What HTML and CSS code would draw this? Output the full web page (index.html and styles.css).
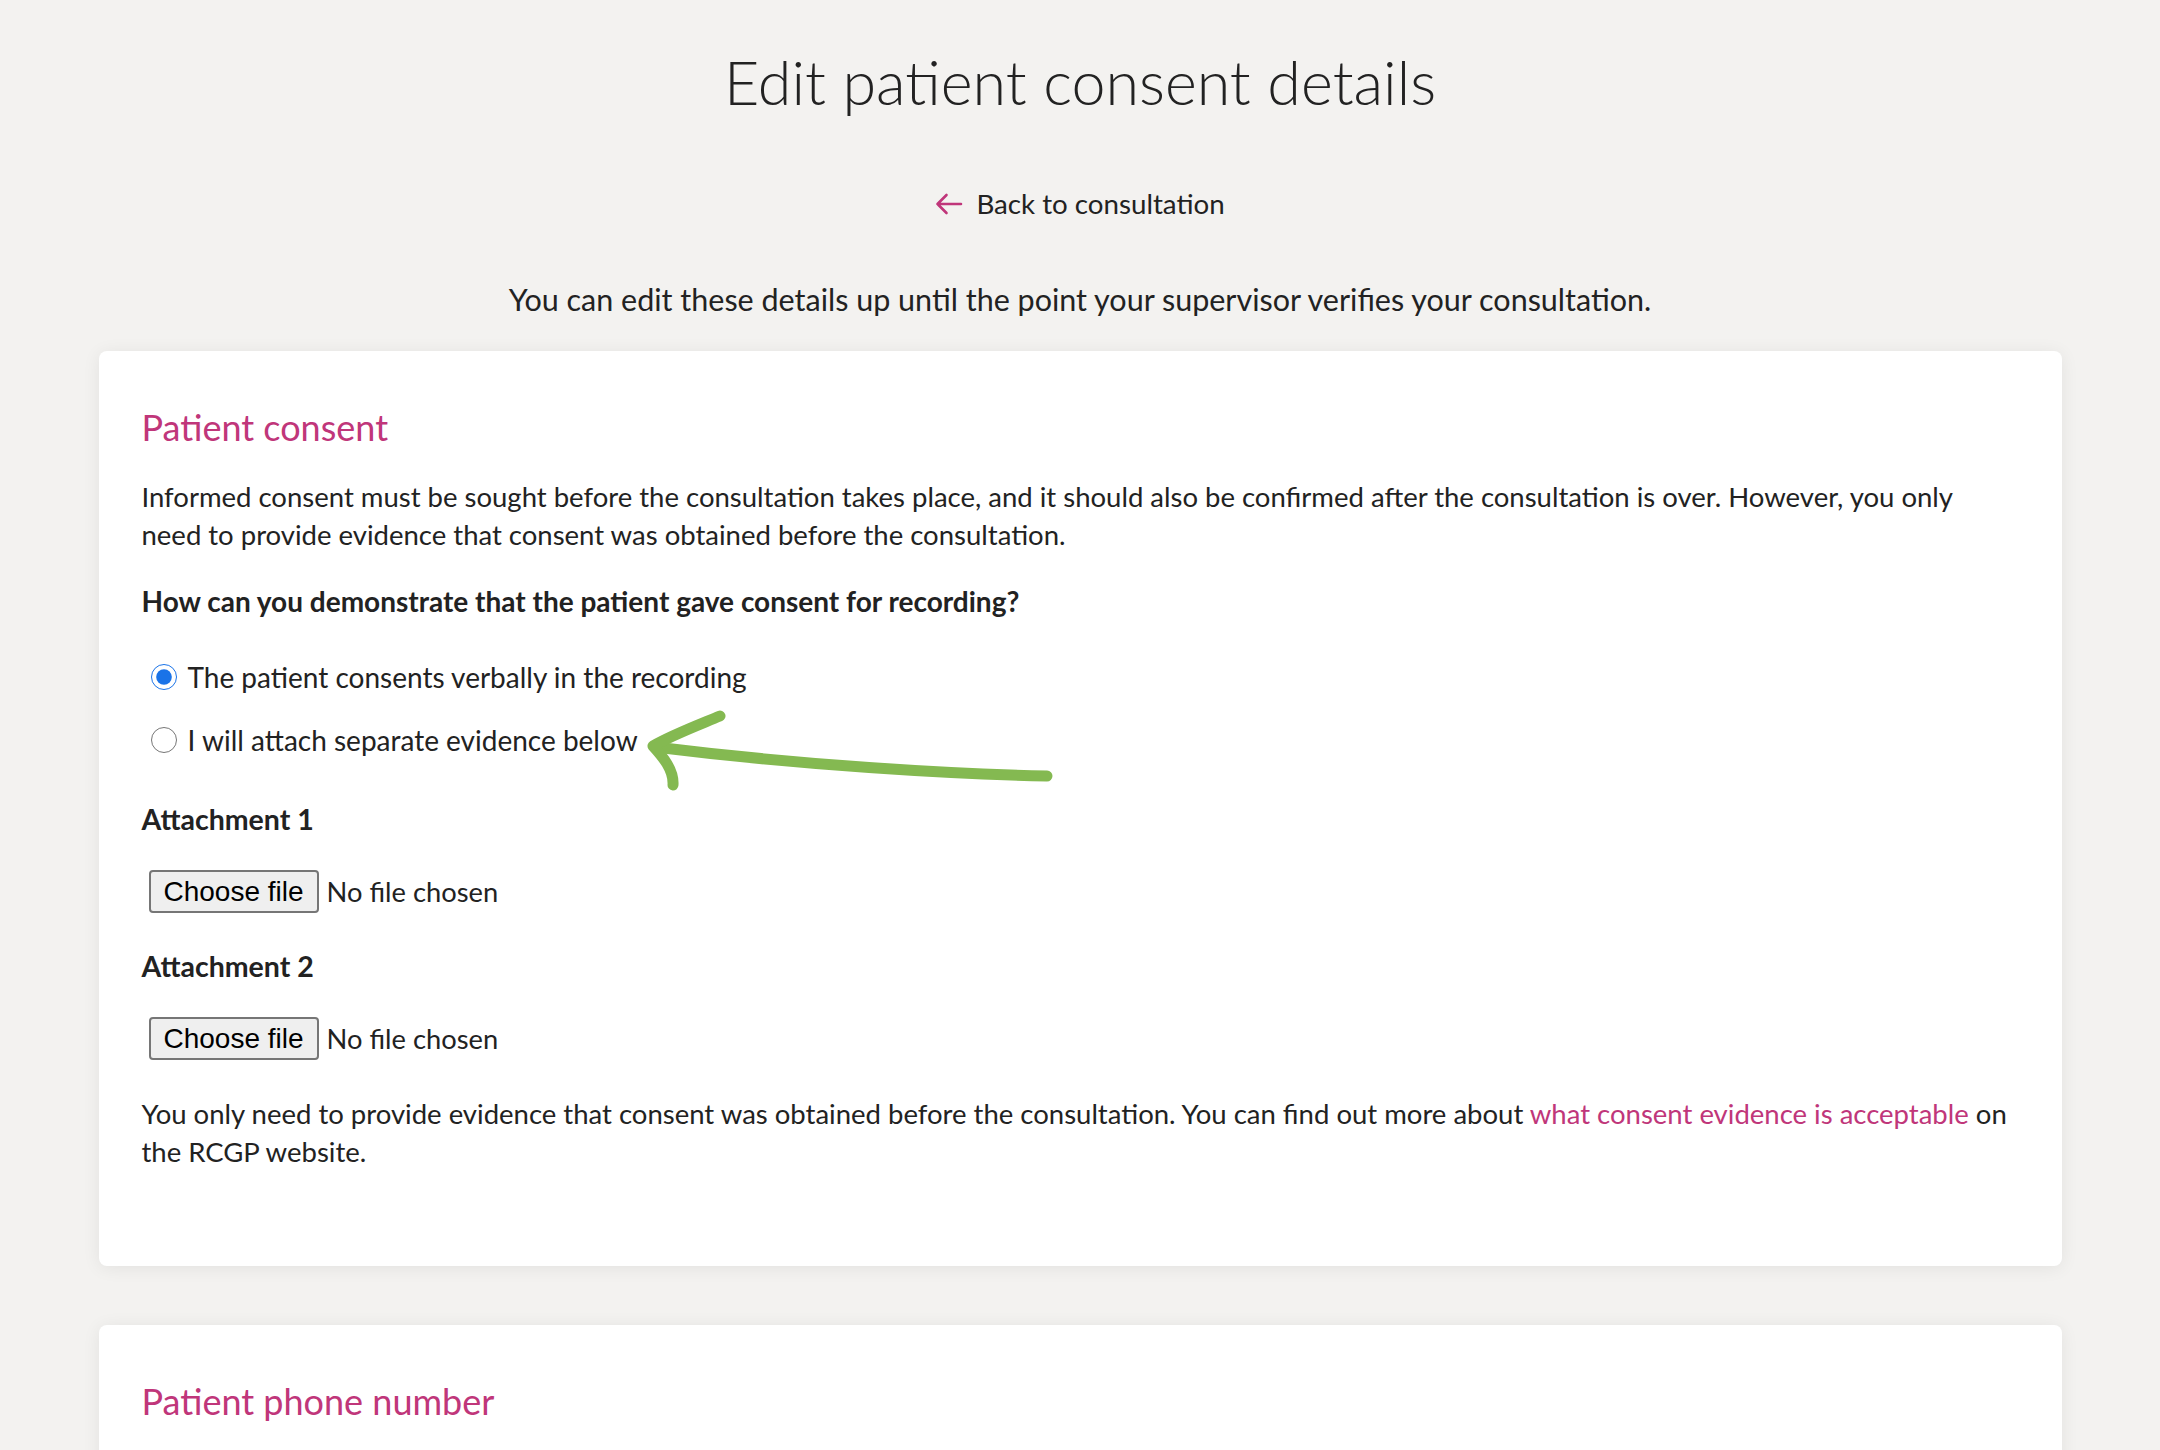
FILE: index.html
```
<!DOCTYPE html>
<html>

	<head>
		<title>Edit patient consent details</title>
		<link rel="stylesheet" href="styles.css">
	</head>

	<body>

		<header>
			<h1>Edit patient consent details</h1>
			<a class="back" href="#">
				<svg width="28" height="28" viewBox="0 0 28 28"><path d="M26 14H2.5M11.5 5L2.5 14l9 9" fill="none" stroke="#c0367a" stroke-width="2.6" stroke-linecap="round" stroke-linejoin="round"/></svg>
				Back to consultation
			</a>
			<p class="intro">You can edit these details up until the point your supervisor verifies your consultation.</p>
		</header>

		<main>
			<section class="card">
				<h2>Patient consent</h2>
				<p>Informed consent must be sought before the consultation takes place, and it should also be confirmed after the consultation is over. However, you only need to provide evidence that consent was obtained before the consultation.</p>
				<p class="question">How can you demonstrate that the patient gave consent for recording?</p>
				<div class="options">
					<label class="option"><input type="radio" name="consent" checked> The patient consents verbally in the recording</label>
					<label class="option"><input type="radio" name="consent"> I will attach separate evidence below</label>
				</div>
				<p class="label">Attachment 1</p>
				<div class="file">
					<button type="button">Choose file</button>
					<span>No file chosen</span>
				</div>
				<p class="label">Attachment 2</p>
				<div class="file">
					<button type="button">Choose file</button>
					<span>No file chosen</span>
				</div>
				<p class="note">You only need to provide evidence that consent was obtained before the consultation. You can find out more about <a href="#">what consent evidence is acceptable</a> on the RCGP website.</p>
			</section>

			<section class="card">
				<h2>Patient phone number</h2>
			</section>
		</main>

		<!-- hand drawn annotation arrow -->
		<svg class="scribble" width="2160" height="1450" viewBox="0 0 2160 1450">
			<path d="M1047 776C950 774 800 765 655 747" />
			<path d="M720 716C696 726 672 735 653 746C663 757 674 770 673 785" />
		</svg>

	</body>

</html>
```

FILE: styles.css
```
body {
	margin: 0;
	background: #f3f2f0;
	color: #222222;
	font-family: Lato, "Open Sans", sans-serif;
	font-size: 28px;
	line-height: 38px;
	position: relative;
	height: 1450px;
	overflow: hidden;
}

header {
	text-align: center;
	padding-top: 46px;
}

h1 {
	font-weight: 300;
	font-size: 61px;
	line-height: 72px;
	margin: 0;
}

a.back {
	display: inline-flex;
	align-items: center;
	gap: 13px;
	margin-top: 67px;
	color: #222222;
	font-size: 27.7px;
	text-decoration: none;
}

p {
	margin: 0;
	font-size: 27.5px;
}

p.intro {
	margin-top: 54px;
	font-size: 30.5px;
}

main {
	width: 1963px;
	margin: 33px auto 0;
}

.card {
	background: #ffffff;
	border-radius: 8px;
	box-shadow: 0 2px 18px rgba(0,0,0,0.07);
	padding: 55px 43px 95px;
	margin-bottom: 59px;
}

h2 {
	color: #c0367a;
	font-weight: 400;
	font-size: 36px;
	line-height: 43px;
	margin: 0 0 29px;
}

p.question {
	font-weight: 700;
	font-size: 28px;
	margin-top: 28px;
}

.options {
	display: flex;
	flex-direction: column;
	gap: 25px;
	margin-top: 38px;
}

.option {
	display: flex;
	align-items: center;
}

.option input {
	width: 26px;
	height: 26px;
	margin: 0 11px 0 9px;
	accent-color: #1a73e8;
}

p.label {
	font-weight: 700;
	font-size: 28.5px;
	margin-top: 41px;
}

.file {
	display: flex;
	align-items: center;
	margin-top: 32px;
	margin-left: 7px;
	font-size: 27.3px;
}

.file + p.label {
	margin-top: 34px;
}

.file button {
	font: 28px "Liberation Sans", Arial, sans-serif;
	color: #000000;
	background: #efefef;
	border: 2px solid #767676;
	border-radius: 4px;
	height: 43px;
	padding: 0 13px;
	margin-right: 8px;
}

p.note {
	margin-top: 35px;
}

p.note a {
	color: #c0367a;
	text-decoration: none;
}

svg.scribble {
	position: absolute;
	left: 0;
	top: 0;
	pointer-events: none;
	fill: none;
	stroke: #84b951;
	stroke-width: 11;
	stroke-linecap: round;
	stroke-linejoin: round;
}
```
